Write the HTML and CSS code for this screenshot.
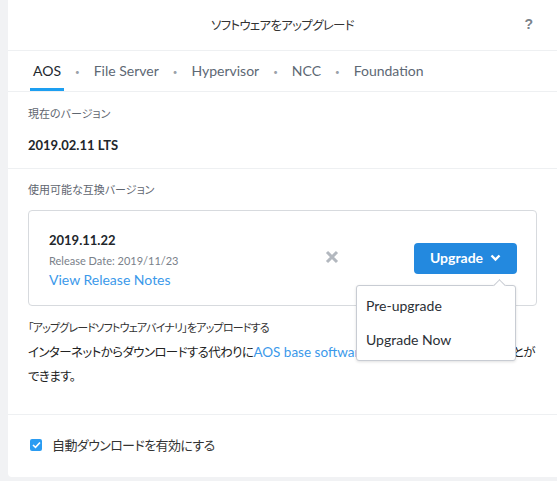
FILE: index.html
```html
<!DOCTYPE html>
<html lang="ja">
<head>
<meta charset="utf-8">
<title>ソフトウェアをアップグレード</title>
<link rel="stylesheet" href="styles.css">
</head>
<body>
<div class="panel">
  <div class="header">
    <span></span>
    <span class="title">ソフトウェアをアップグレード</span>
    <span class="help">?</span>
  </div>
  <div class="tabs">
    <span class="tab active">AOS</span>
    <span class="sep">•</span>
    <span class="tab">File Server</span>
    <span class="sep">•</span>
    <span class="tab">Hypervisor</span>
    <span class="sep">•</span>
    <span class="tab">NCC</span>
    <span class="sep">•</span>
    <span class="tab">Foundation</span>
  </div>
  <div class="section current">
    <div class="label">現在のバージョン</div>
    <div class="version">2019.02.11 LTS</div>
  </div>
  <div class="section available">
    <div class="label">使用可能な互換バージョン</div>
    <div class="card">
      <div class="info">
        <div class="version">2019.11.22</div>
        <div class="date">Release Date: 2019/11/23</div>
        <a class="link notes">View Release Notes</a>
      </div>
      <svg class="xicon" width="14" height="14" viewBox="0 0 14 14"><path d="M2 2 L12 12 M12 2 L2 12" stroke="#b3b8bf" stroke-width="3" stroke-linecap="butt"/></svg>
      <div class="btnwrap">
        <button class="upgrade">Upgrade <svg width="11" height="8" viewBox="0 0 11 8"><path d="M1.5 1.5 L5.5 5.5 L9.5 1.5" fill="none" stroke="#fff" stroke-width="2.4"/></svg></button>
        <div class="menu">
          <div class="item">Pre-upgrade</div>
          <div class="item">Upgrade Now</div>
        </div>
      </div>
    </div>
    <div class="upload-title">「アップグレードソフトウェアバイナリ」をアップロードする</div>
    <p class="upload-text">インターネットからダウンロードする代わりに<a class="link">AOS base software binary</a>をアップロードすることができます。</p>
  </div>
  <div class="section auto">
    <label class="check"><span class="box"><svg width="9" height="8" viewBox="0 0 9 8"><path d="M1 4 L3.5 6.3 L8 1.5" fill="none" stroke="#fff" stroke-width="1.6"/></svg></span>自動ダウンロードを有効にする</label>
  </div>
</div>
</body>
</html>
```
FILE: styles.css
```css
* { box-sizing: border-box; }
html, body { margin: 0; padding: 0; }
body {
  background: #f1f2f4;
  font-family: Lato, "Noto Sans CJK JP", sans-serif;
  font-feature-settings: "palt";
  color: #333;
  height: 481px;
  overflow: hidden;
}
.panel {
  margin-left: 8px;
  background: #fff;
  height: 477px;
  border-bottom-left-radius: 4px;
}
.header {
  height: 51px;
  border-bottom: 1px solid #eef0f2;
  display: grid;
  grid-template-columns: 1fr auto 1fr;
  align-items: center;
  padding: 0 24px 2px;
}
.title { font-size: 12.5px; letter-spacing: -0.7px; color: #333; }
.help {
  justify-self: end;
  font-family: "Liberation Sans", sans-serif;
  font-weight: bold;
  font-size: 14px;
  color: #7b828b;
}
.tabs {
  height: 41px;
  border-bottom: 1px solid #eef0f2;
  display: flex;
  align-items: stretch;
  padding-left: 22px;
}
.tab {
  padding: 2px 3px 0;
  display: flex;
  align-items: center;
  font-size: 14px;
  color: #5d6874;
  border-bottom: 3px solid transparent;
}
.tab.active { color: #22272e; border-bottom-color: #1d9ff1; }
.sep {
  display: flex;
  align-items: center;
  font-size: 8px;
  color: #9aa1a9;
  margin: 0 11px;
  padding-top: 2px;
}
.section { padding: 0 20px; border-bottom: 1px solid #eef0f2; }
.label { font-size: 11px; color: #5f6670; line-height: 16px; }
.version { font-size: 13px; font-weight: bold; color: #22262b; line-height: 18px; }
.current { padding-top: 14px; padding-bottom: 14px; }
.current .version { margin-top: 14px; }
.available { padding-top: 13px; height: 246px; }
.card {
  margin-top: 12px;
  border: 1px solid #d7dade;
  border-radius: 4px;
  height: 96px;
  display: flex;
  align-items: center;
  padding: 0 19px 0 20px;
}
.info { flex: 1; padding-top: 4px; }
.date { font-size: 11px; color: #7a818a; margin-top: 5px; line-height: 14px; }
.link { color: #3b99ea; text-decoration: none; }
.notes { display: block; font-size: 14px; margin-top: 3px; line-height: 18px; }
.xicon { margin-right: 75px; margin-top: -3px; }
.btnwrap { position: relative; }
.upgrade {
  display: flex;
  align-items: center;
  gap: 7px;
  height: 31px;
  width: 103px;
  justify-content: center;
  background: #2389df;
  color: #fff;
  border: 0;
  border-radius: 4px;
  font-family: Lato, sans-serif;
  font-size: 14px;
  font-weight: bold;
  padding: 0 0 1px;
}
.menu {
  position: absolute;
  top: 42px;
  right: 1px;
  width: 160px;
  background: #fff;
  border: 1px solid #c8ccd3;
  border-radius: 3px;
  box-shadow: 0 1px 3px rgba(0,0,0,0.12);
  padding: 3px 0;
  z-index: 2;
}
.menu::before {
  content: "";
  position: absolute;
  top: -5px;
  right: 11px;
  width: 8px;
  height: 8px;
  background: #fff;
  border-left: 1px solid #c8ccd3;
  border-top: 1px solid #c8ccd3;
  transform: rotate(45deg);
}
.item {
  height: 34px;
  line-height: 34px;
  padding-left: 9px;
  font-size: 14px;
  color: #2b3036;
}
.upload-title { font-size: 11px; letter-spacing: -0.8px; color: #333; margin-top: 14px; line-height: 16px; }
.upload-text { font-size: 12.5px; letter-spacing: -0.6px; color: #222; margin: 4px 0 0; line-height: 24px; }
.upload-text .link { font-size: 13.5px; letter-spacing: 0; }
.auto { border-bottom: 0; padding: 20px 22px 0; }
.check { display: flex; align-items: center; font-size: 13px; letter-spacing: -0.6px; color: #333; }
.box {
  width: 12px;
  height: 12px;
  background: #2a9cf2;
  border-radius: 2px;
  display: flex;
  align-items: center;
  justify-content: center;
  margin-right: 10px;
}
```
